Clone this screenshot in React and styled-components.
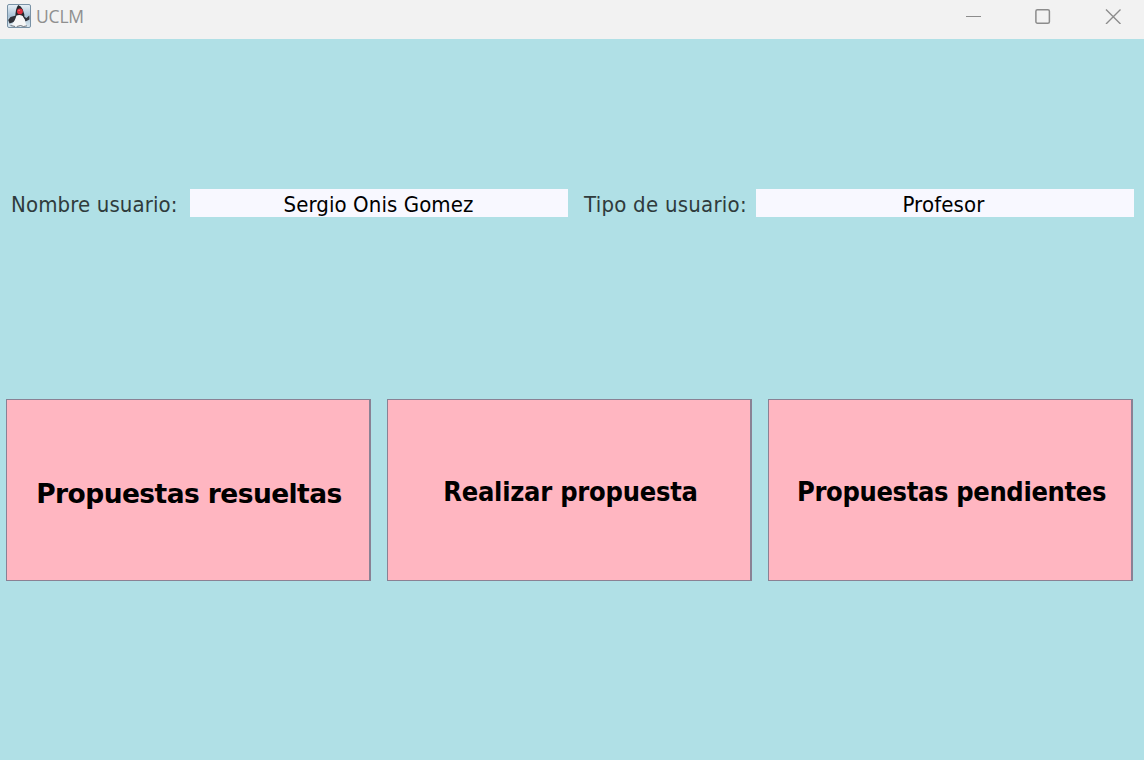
import React from "react";
import styled, { createGlobalStyle } from "styled-components";

const GlobalStyle = createGlobalStyle`
  * { box-sizing: border-box; }
  body { margin: 0; overflow: hidden; }
`;

const Window = styled.div`
  display: flex;
  flex-direction: column;
  width: 1144px;
  height: 760px;
  background: #b0e0e6;
  font-family: "DejaVu Sans Condensed", "DejaVu Sans", sans-serif;
  font-stretch: condensed;
`;

const TitleBar = styled.header`
  display: flex;
  align-items: center;
  height: 39px;
  padding: 0 23px 7px 7px;
  background: #f2f2f2;
`;

const Title = styled.h1`
  flex: 1;
  margin: 0 0 0 5px;
  font: 400 17.5px/24px "Open Sans", "Noto Sans", sans-serif;
  letter-spacing: -0.2px;
  color: #8f8f8f;
`;

const Controls = styled.div`
  display: flex;
  gap: 54px;
`;

const ControlIcon = styled.svg`
  display: block;
  width: 16px;
  height: 16px;
  fill: none;
  stroke: #8c8c8c;
  stroke-width: ${(p) => p.$weight || 1.2};
`;

const UserInfo = styled.section`
  display: flex;
  height: 28px;
  margin-top: 150px;
  padding: 0 10px 0 11px;
`;

const Label = styled.label`
  width: ${(p) => p.$width}px;
  margin-left: ${(p) => p.$gap || 0}px;
  font-size: 22px;
  line-height: 32px;
  letter-spacing: ${(p) => p.$spacing}px;
  white-space: nowrap;
  color: #2f3b3c;
`;

const Field = styled.output`
  width: 378px;
  background: #f8f8ff;
  font-size: 22px;
  line-height: 32px;
  letter-spacing: ${(p) => p.$spacing}px;
  text-align: center;
  white-space: nowrap;
  padding-right: ${(p) => p.$shift}px;
  color: #000;
`;

const Actions = styled.nav`
  display: flex;
  gap: 16px;
  margin-top: 182px;
  padding-left: 6px;
`;

const ActionButton = styled.button`
  width: 365px;
  height: 182px;
  padding: ${(p) => p.$top || 3}px 0 0 ${(p) => p.$left || 2}px;
  border: solid #8a8194;
  border-width: 1px 2px 1px 1px;
  background: #ffb6c1;
  font-family: ${(p) =>
    p.$wide ? '"DejaVu Sans"' : '"DejaVu Sans Condensed", "DejaVu Sans"'}, sans-serif;
  font-stretch: ${(p) => (p.$wide ? "normal" : "condensed")};
  font-weight: 700;
  font-size: ${(p) => p.$size}px;
  letter-spacing: ${(p) => p.$spacing}px;
  white-space: nowrap;
  color: #000;
`;

const DukeIcon = () => (
  <svg width="24" height="24" viewBox="0 0 24 24" aria-hidden="true">
    <defs>
      <linearGradient id="tile" x1="0" y1="0" x2="0" y2="1">
        <stop offset="0" stopColor="#e9f1f7" />
        <stop offset="0.5" stopColor="#a9c2d6" />
        <stop offset="1" stopColor="#dce8f0" />
      </linearGradient>
    </defs>
    <rect x="0.5" y="0.5" width="23" height="23" rx="1.5" fill="url(#tile)" stroke="#7891a5" />
    <path d="M9 11.5 L3.5 13 L1.2 16 L2.5 19.5 L5.5 18.5 L9 16.5Z" fill="#303239" />
    <path d="M16 12 L19.5 14 L22.3 11.5 L22.5 15.5 L18.5 17.5Z" fill="#303239" />
    <path d="M11.2 1 Q14 1.8 15.8 5.5 Q17.8 10 17.5 14.5 L8.5 14 Q8 5 11.2 1Z" fill="#24262c" />
    <path d="M9.5 11.5 Q13 10.5 15.7 12 Q18.8 16 19.2 21.7 L16.5 22.5 L13.5 21.5 L9.8 22.5 L4.5 21 Q7.5 18 9.5 11.5Z" fill="#f6f6f6" />
    <path d="M3.5 21.5 L8 22.5 M9.8 22.5 L13.5 21.5 L16.5 22.5 L20 21.8" fill="none" stroke="#55585e" strokeWidth="0.8" />
    <ellipse cx="12.9" cy="7.4" rx="2.9" ry="2.8" fill="#dc2f3d" />
    <ellipse cx="12.2" cy="6.4" rx="1" ry="0.7" fill="#ef7078" />
  </svg>
);

const WindowControls = () => (
  <Controls>
    <ControlIcon viewBox="0 0 16 16" $weight={1}><path d="M1 8.5H16" /></ControlIcon>
    <ControlIcon viewBox="0 0 16 16" $weight={1.5}>
      <rect x="0.9" y="1.8" width="13.5" height="13.4" rx="1.5" />
    </ControlIcon>
    <ControlIcon viewBox="0 0 16 16" $weight={1.4}><path d="M1 1.5L15.5 16M15.5 1.5L1 16" /></ControlIcon>
  </Controls>
);

export default function App() {
  return (
    <Window>
      <GlobalStyle />
      <TitleBar>
        <DukeIcon />
        <Title>UCLM</Title>
        <WindowControls />
      </TitleBar>
      <UserInfo>
        <Label $width={179} $spacing={0.12}>Nombre usuario:</Label>
        <Field $spacing={0.08} $shift={1}>Sergio Onis Gomez</Field>
        <Label $width={172} $gap={16} $spacing={0.25}>Tipo de usuario:</Label>
        <Field $spacing={0.15} $shift={3}>Profesor</Field>
      </UserInfo>
      <Actions>
        <ActionButton $wide $size={26.5} $spacing={-0.57} $top={6}>Propuestas resueltas</ActionButton>
        <ActionButton $size={27} $spacing={-0.24} $left={3}>Realizar propuesta</ActionButton>
        <ActionButton $size={27} $spacing={-0.34} $left={3}>Propuestas pendientes</ActionButton>
      </Actions>
    </Window>
  );
}
